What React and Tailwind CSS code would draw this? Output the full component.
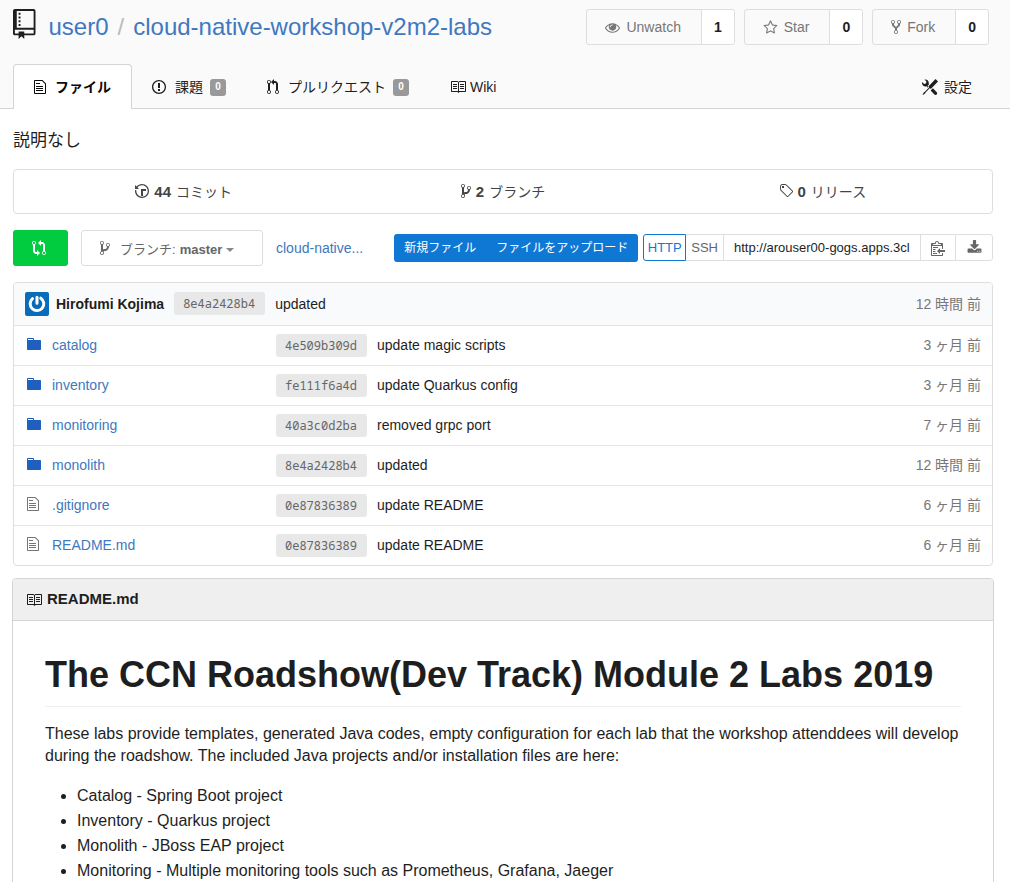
const ICONS = {
  repo: [12, 16, "M4 9H3V8h1v1zm0-3H3v1h1V6zm0-2H3v1h1V4zm0-2H3v1h1V2zm8-1v12c0 .55-.45 1-1 1H6v2l-1.5-1.5L3 16v-2H1c-.55 0-1-.45-1-1V1c0-.55.45-1 1-1h10c.55 0 1 .45 1 1zm-1 10H1v2h2v-1h3v1h5v-2zm0-10H2v9h9V1z"],
  file: [12, 16, "M6 5H2V4h4v1zM2 8h7V7H2v1zm0 2h7V9H2v1zm0 2h7v-1H2v1zm10-7.5V14c0 .55-.45 1-1 1H1c-.55 0-1-.45-1-1V2c0-.55.45-1 1-1h7.5L12 4.5zM11 5L8 2H1v12h10V5z"],
  issue: [14, 16, "M7 2.3c3.14 0 5.7 2.56 5.7 5.7s-2.56 5.7-5.7 5.7A5.71 5.71 0 0 1 1.3 8c0-3.14 2.56-5.7 5.7-5.7zM7 1C3.14 1 0 4.14 0 8s3.14 7 7 7 7-3.14 7-7-3.14-7-7-7zm1 3H6v5h2V4zm0 6H6v2h2v-2z"],
  pull: [12, 16, "M11 11.28V5c-.03-.78-.34-1.47-.94-2.06C9.46 2.35 8.78 2.03 8 2H7V0L4 3l3 3V4h1c.27.02.48.11.69.31.21.2.3.42.31.69v6.28A1.993 1.993 0 0 0 10 15a1.993 1.993 0 0 0 1-3.72zm-1 2.92c-.66 0-1.2-.55-1.2-1.2 0-.65.55-1.2 1.2-1.2.65 0 1.2.55 1.2 1.2 0 .65-.55 1.2-1.2 1.2zM4 3c0-1.11-.89-2-2-2a1.993 1.993 0 0 0-1 3.72v6.56A1.993 1.993 0 0 0 2 15a1.993 1.993 0 0 0 1-3.72V4.72c.59-.34 1-.98 1-1.72zm-.8 10c0 .66-.55 1.2-1.2 1.2-.65 0-1.2-.55-1.2-1.2 0-.65.55-1.2 1.2-1.2.65 0 1.2.55 1.2 1.2zM2 4.2C1.34 4.2.8 3.65.8 3c0-.65.55-1.2 1.2-1.2.65 0 1.2.55 1.2 1.2 0 .65-.55 1.2-1.2 1.2z"],
  book: [16, 16, "M3 5h4v1H3V5zm0 3h4V7H3v1zm0 2h4V9H3v1zm11-5h-4v1h4V5zm0 2h-4v1h4V7zm0 2h-4v1h4V9zm2-6v9c0 .55-.45 1-1 1H9.5l-1 1-1-1H2c-.55 0-1-.45-1-1V3c0-.55.45-1 1-1h5.5l1 1 1-1H15c.55 0 1 .45 1 1zm-8 .5L7.5 3H2v9h6V3.5zm7-.5H9.5l-.5.5V12h6V3z"],
  tools: [16, 16, "M4.48 7.27c.26.26 1.28 1.33 1.28 1.33l.56-.58-.88-.91 1.69-1.8s-.76-.74-.43-.45c.32-1.19.03-2.51-.87-3.44C4.93.5 3.66.2 2.52.51l1.93 2-.51 1.96-1.89.52-1.93-1.99C-.19 4.17.1 5.48 1 6.4c.94.98 2.29 1.26 3.48.87zm6.44 1.94l-2.33 2.3 3.84 3.98c.31.33.73.49 1.14.49.41 0 .82-.16 1.14-.49.63-.65.63-1.7 0-2.35l-3.79-3.93zM16 2.53L13.55 0 6.33 7.46l.88.91-4.31 4.46-.99.53-1.39 2.27.35.37 2.2-1.44.51-1.02L7.9 9.08l.88.91L16 2.53z"],
  history: [14, 16, "M8 13H6V6h5v2H8v5zM7 1C4.81 1 2.87 2.02 1.59 3.59L0 2v4h4L2.5 4.5C3.55 3.17 5.17 2.3 7 2.3c3.14 0 5.7 2.56 5.7 5.7s-2.56 5.7-5.7 5.7A5.71 5.71 0 0 1 1.3 8c0-.34.03-.67.09-1H.08C.03 7.33 0 7.66 0 8c0 3.86 3.14 7 7 7s7-3.14 7-7-3.14-7-7-7z"],
  branch: [10, 16, "M10 5c0-1.11-.89-2-2-2a1.993 1.993 0 0 0-1 3.72v.3c-.02.52-.23.98-.63 1.38-.4.4-.86.61-1.38.63-.83.02-1.48.16-2 .45V4.72a1.993 1.993 0 0 0-1-3.72C.88 1 0 1.89 0 3a2 2 0 0 0 1 1.72v6.56c-.59.35-1 .99-1 1.72 0 1.11.89 2 2 2 1.11 0 2-.89 2-2 0-.53-.2-1-.53-1.36.09-.06.48-.41.59-.47.25-.11.56-.17.94-.17 1.05-.05 1.95-.45 2.75-1.25S8.95 7.77 9 6.73h-.02C9.59 6.37 10 5.73 10 5zM2 1.8c.66 0 1.2.55 1.2 1.2 0 .65-.55 1.2-1.2 1.2C1.35 4.2.8 3.65.8 3c0-.65.55-1.2 1.2-1.2zm0 12.41c-.66 0-1.2-.55-1.2-1.2 0-.65.55-1.2 1.2-1.2.65 0 1.2.55 1.2 1.2 0 .65-.55 1.2-1.2 1.2zm6-8c-.66 0-1.2-.55-1.2-1.2 0-.65.55-1.2 1.2-1.2.65 0 1.2.55 1.2 1.2 0 .65-.55 1.2-1.2 1.2z"],
  tag: [14, 16, "M7.73 1.73C7.26 1.26 6.62 1 5.96 1H3.5C2.13 1 1 2.13 1 3.5v2.47c0 .66.27 1.3.73 1.77l6.06 6.06c.39.39 1.02.39 1.41 0l4.59-4.59a.996.996 0 0 0 0-1.41L7.73 1.73zM2.38 7.09c-.31-.3-.47-.7-.47-1.13V3.5c0-.88.72-1.59 1.59-1.59h2.47c.42 0 .83.16 1.13.47l6.14 6.13-4.73 4.73-6.13-6.15zM3.01 3h2v2H3V3h.01z"],
  compare: [14, 16, "M5 12H4c-.27-.02-.48-.11-.69-.31-.21-.2-.3-.42-.31-.69V4.72A1.993 1.993 0 0 0 2 1a1.993 1.993 0 0 0-1 3.72V11c.03.78.34 1.47.94 2.06.6.59 1.28.91 2.06.94h1v2l3-3-3-3v2zM2 1.8c.66 0 1.2.55 1.2 1.2 0 .65-.55 1.2-1.2 1.2C1.35 4.2.8 3.65.8 3c0-.65.55-1.2 1.2-1.2zm11 9.48V5c-.03-.78-.34-1.47-.94-2.06-.6-.59-1.28-.91-2.06-.94H9V0L6 3l3 3V4h1c.27.02.48.11.69.31.21.2.3.42.31.69v6.28A1.993 1.993 0 0 0 12 15a1.993 1.993 0 0 0 1-3.72zm-1 2.92c-.66 0-1.2-.55-1.2-1.2 0-.65.55-1.2 1.2-1.2.65 0 1.2.55 1.2 1.2 0 .65-.55 1.2-1.2 1.2z"],
  fork: [10, 16, "M8 1a1.993 1.993 0 0 0-1 3.72V6L5 8 3 6V4.72A1.993 1.993 0 0 0 2 1a1.993 1.993 0 0 0-1 3.72V6.5l3 3v1.78A1.993 1.993 0 0 0 5 15a1.993 1.993 0 0 0 1-3.72V9.5l3-3V4.72A1.993 1.993 0 0 0 8 1zM2 4.2C1.34 4.2.8 3.65.8 3c0-.65.55-1.2 1.2-1.2.65 0 1.2.55 1.2 1.2 0 .65-.55 1.2-1.2 1.2zm3 10c-.66 0-1.2-.55-1.2-1.2 0-.65.55-1.2 1.2-1.2.65 0 1.2.55 1.2 1.2 0 .65-.55 1.2-1.2 1.2zm3-10c-.66 0-1.2-.55-1.2-1.2 0-.65.55-1.2 1.2-1.2.65 0 1.2.55 1.2 1.2 0 .65-.55 1.2-1.2 1.2z"],
  folder: [14, 16, "M13 4H7V3c0-.66-.31-1-1-1H1c-.55 0-1 .45-1 1v10c0 .55.45 1 1 1h12c.55 0 1-.45 1-1V5c0-.55-.45-1-1-1zM6 4H1V3h5v1z"],
  clippy: [14, 16, "M2 13h4v1H2v-1zm5-6H2v1h5V7zm2 3V8l-3 3 3 3v-2h5v-2H9zM4.5 9H2v1h2.5V9zM2 12h2.5v-1H2v1zm9 1h1v2c-.02.28-.11.52-.3.7-.19.18-.42.28-.7.3H1c-.55 0-1-.45-1-1V4c0-.55.45-1 1-1h3c0-1.11.89-2 2-2 1.11 0 2 .89 2 2h3c.55 0 1 .45 1 1v5h-1V6H1v9h10v-2zM2 5h8c0-.55-.45-1-1-1H8c-.55 0-1-.45-1-1s-.45-1-1-1-1 .45-1 1-.45 1-1 1H3c-.55 0-1 .45-1 1z"],
  eye: [1792, 1792, "M1664 960q-152-236-381-353 61 104 61 225 0 185-131.5 316.5t-316.5 131.5-316.5-131.5-131.5-316.5q0-121 61-225-229 117-381 353 133 205 333.5 326.5t434.5 121.5 434.5-121.5 333.5-326.5zm-720-384q0-20-14-34t-34-14q-125 0-214.5 89.5t-89.5 214.5q0 20 14 34t34 14 34-14 14-34q0-86 61-147t147-61q20 0 34-14t14-34zm848 384q0 34-20 69-140 230-376.5 368.5t-499.5 138.5-499.5-139-376.5-368q-20-35-20-69t20-69q140-229 376.5-368t499.5-139 499.5 139 376.5 368q20 35 20 69z"],
  star: [1792, 1792, "M1201 1004l306-297-422-62-189-382-189 382-422 62 306 297-73 421 378-199 377 199zm527-357q0 22-26 48l-363 354 86 500q1 7 1 20 0 50-41 50-19 0-40-12l-449-236-449 236q-22 12-40 12-21 0-31.5-14.5t-10.5-35.5q0-6 2-20l86-500-364-354q-25-27-25-48 0-37 56-46l502-73 225-455q19-41 49-41t49 41l225 455 502 73q56 9 56 46z"],
  download: [1792, 1792, "M1344 1344q0-26-19-45t-45-19-45 19-19 45 19 45 45 19 45-19 19-45zm256 0q0-26-19-45t-45-19-45 19-19 45 19 45 45 19 45-19 19-45zm128-224v320q0 40-28 68t-68 28h-1472q-40 0-68-28t-28-68v-320q0-40 28-68t68-28h465l135 136q58 56 136 56t136-56l136-136h464q40 0 68 28t28 68zm-325-569q17 41-14 70l-448 448q-18 19-45 19t-45-19l-448-448q-31-29-14-70 17-39 59-39h256v-448q0-26 19-45t45-19h256q26 0 45 19t19 45v448h256q42 0 59 39z"],
};

function Icon({ name, className = "h-4" }) {
  const [w, h, d] = ICONS[name];
  return (
    <svg viewBox={`0 0 ${w} ${h}`} className={`shrink-0 fill-current ${className}`} aria-hidden="true">
      <path d={d} />
    </svg>
  );
}

function CountButton({ icon, iconClass, label, count }) {
  return (
    <div className="flex h-9 rounded-[3px] border border-[#dededf] text-sm">
      <button type="button" className="flex items-center gap-1.5 pr-5 pl-[18px] text-[#767676]">
        <Icon name={icon} className={iconClass} />
        {label}
      </button>
      <a href="#" className="flex items-center rounded-r-[3px] border-l border-[#dededf] bg-white px-3 font-bold text-[#1e1e1e]">
        {count}
      </a>
    </div>
  );
}

function Badge({ children }) {
  return (
    <span className="-ml-0.5 flex h-[17px] w-4 items-center justify-center rounded-[3px] bg-[#999] text-[10px] font-bold text-white">
      {children}
    </span>
  );
}

function Hash({ children }) {
  return (
    <a
      href="#"
      className="inline-block rounded-[3px] bg-[#e8e8e8] pr-[10px] pl-[9px] align-middle font-['Noto_Sans_Mono','DejaVu_Sans_Mono',monospace] text-xs leading-[23px] font-normal text-[#666]"
    >
      {children}
    </a>
  );
}

const FILES = [
  ["folder", "catalog", "4e509b309d", "update magic scripts", "3 ヶ月 前"],
  ["folder", "inventory", "fe111f6a4d", "update Quarkus config", "3 ヶ月 前"],
  ["folder", "monitoring", "40a3c0d2ba", "removed grpc port", "7 ヶ月 前"],
  ["folder", "monolith", "8e4a2428b4", "updated", "12 時間 前"],
  ["file", ".gitignore", "0e87836389", "update README", "6 ヶ月 前"],
  ["file", "README.md", "0e87836389", "update README", "6 ヶ月 前"],
];

const LABS = [
  "Catalog - Spring Boot project",
  "Inventory - Quarkus project",
  "Monolith - JBoss EAP project",
  "Monitoring - Multiple monitoring tools such as Prometheus, Grafana, Jaeger",
];

function Header() {
  return (
    <header className="border-b border-[#d4d4d5] bg-[#fafafa]">
      <div className="flex items-start justify-between pt-[9px] pr-[21px] pl-[13px]">
        <h1 className="flex items-start text-2xl leading-9 text-[#4078c0]">
          <Icon name="repo" className="mr-[13px] h-[30px] text-[#1e1e1e]" />
          <a href="#">user0</a>
          <span className="mx-[9px] text-[#bbb]">/</span>
          <a href="#">cloud-native-workshop-v2m2-labs</a>
        </h1>
        <div className="flex gap-[9px]">
          <CountButton icon="eye" iconClass="h-[15px]" label="Unwatch" count="1" />
          <CountButton icon="star" iconClass="h-[15px]" label="Star" count="0" />
          <CountButton icon="fork" iconClass="h-4" label="Fork" count="0" />
        </div>
      </div>
      <nav className="mt-[19px] flex h-11 pr-[38px] pl-[13px] text-sm text-[#1e1e1e]">
        <a
          href="#"
          className="-mb-px flex h-[45px] items-center gap-[9px] rounded-t-[4px] border border-b-0 border-[#d4d4d5] bg-white px-5 font-bold text-[#0a0a0a]"
        >
          <Icon name="file" />
          ファイル
        </a>
        <a href="#" className="ml-5 flex items-center gap-[9px] pt-0.5">
          <Icon name="issue" />
          課題
          <Badge>0</Badge>
        </a>
        <a href="#" className="ml-[41px] flex items-center gap-[9px] pt-0.5">
          <Icon name="pull" />
          プルリクエスト
          <Badge>0</Badge>
        </a>
        <a href="#" className="ml-[41px] flex items-center gap-1 pt-0.5">
          <Icon name="book" />
          Wiki
        </a>
        <a href="#" className="ml-auto flex items-center gap-1.5 pt-0.5">
          <Icon name="tools" />
          設定
        </a>
      </nav>
    </header>
  );
}

function Stats() {
  const items = [
    ["history", "44", "コミット"],
    ["branch", "2", "ブランチ"],
    ["tag", "0", "リリース"],
  ];
  return (
    <div className="mt-[15px] grid h-[45px] grid-cols-3 rounded-[4px] border border-[#dededf] px-[10px]">
      {items.map(([icon, n, label]) => (
        <a key={label} href="#" className="flex items-center justify-center gap-[5px] text-sm text-[#444]">
          <Icon name={icon} className="mb-0.5 h-4" />
          <b className="text-[15px]">{n}</b>
          {label}
        </a>
      ))}
    </div>
  );
}

function Actions() {
  return (
    <div className="mt-4 flex h-9 items-center">
      <button
        type="button"
        aria-label="Compare"
        className="flex h-9 w-[55px] items-center justify-center rounded-[3px] bg-[#01cc40] pr-[3px] text-white"
      >
        <Icon name="compare" />
      </button>
      <button
        type="button"
        className="ml-[13px] flex h-9 w-[182px] items-center rounded-[3px] border border-[#dededf] pl-[18px] text-[13px] text-[#666]"
      >
        <Icon name="branch" className="mr-[10px] h-4" />
        <span className="flex items-center gap-1 pt-[3px]">
          ブランチ:
          <b>master</b>
          <svg viewBox="0 0 8 4" className="h-1 w-2 fill-[#888]" aria-hidden="true">
            <path d="M0 0h8L4 4z" />
          </svg>
        </span>
      </button>
      <a href="#" className="ml-[13px] text-sm text-[#4078c0]">
        cloud-native...
      </a>
      <div className="ml-auto flex h-7 items-start gap-[5px]">
        <div className="flex h-7 rounded-[3px] bg-[#0e78d4] text-xs text-white">
          <button type="button" className="px-[10px]">
            新規ファイル
          </button>
          <button type="button" className="px-[10px]">
            ファイルをアップロード
          </button>
        </div>
        <div className="flex h-[27px] text-[13px] text-[#666]">
          <button type="button" className="w-[43px] rounded-l-[3px] border border-[#0e78d4] text-center text-[#0e78d4]">
            HTTP
          </button>
          <button type="button" className="border-y border-[#dededf] px-[5px]">
            SSH
          </button>
          <input
            aria-label="Clone URL"
            readOnly
            value="http://arouser00-gogs.apps.3cl"
            className="w-[198px] border border-[#dededf] px-[10px] text-[#1e1e1e] outline-none"
          />
          <button
            type="button"
            aria-label="Copy"
            className="flex w-[34px] items-center justify-center border-y border-[#dededf]"
          >
            <Icon name="clippy" />
          </button>
          <button
            type="button"
            aria-label="Download"
            className="flex w-[38px] items-center justify-center rounded-r-[3px] border border-[#dededf]"
          >
            <Icon name="download" className="h-[15px]" />
          </button>
        </div>
      </div>
    </div>
  );
}

function FileTable() {
  return (
    <div className="mt-4 overflow-hidden rounded-[4px] border border-[#dededf]">
      <table className="w-full border-collapse text-left text-sm text-[#1e1e1e]">
        <thead className="bg-[#f9fafb]">
          <tr className="h-[42px]">
            <th colSpan={3} className="p-0 pl-[11px] font-normal">
              <div className="flex items-center">
                <svg viewBox="0 0 24 24" className="mr-[7px] h-6 w-6" aria-hidden="true">
                  <rect width="24" height="24" rx="2" fill="#0a6cb8" />
                  <path
                    d="M12 5.2v6M7.5 6.7A6.8 6.8 0 1 0 15.8 6.2"
                    fill="none"
                    stroke="#fff"
                    strokeWidth="3"
                    strokeLinecap="round"
                  />
                </svg>
                <b className="mr-[10px]">Hirofumi Kojima</b>
                <Hash>8e4a2428b4</Hash>
                <span className="ml-[10px]">updated</span>
              </div>
            </th>
            <td className="p-0 pr-[11px] text-right text-[#777]">12 時間 前</td>
          </tr>
        </thead>
        <tbody>
          {FILES.map(([icon, name, hash, message, age]) => (
            <tr key={name} className="h-10 border-t border-[#e4e4e5]">
              <td className="w-[262px] p-0 pl-[13px]">
                <a href="#" className="flex items-center text-[#4078c0]">
                  <span className="mr-[7px] flex w-[18px] pb-0.5">
                    <Icon name={icon} className={icon === "folder" ? "h-4 text-[#1e5fbf]" : "h-4 text-[#767676]"} />
                  </span>
                  {name}
                </a>
              </td>
              <td className="w-[101px] p-0">
                <Hash>{hash}</Hash>
              </td>
              <td className="p-0">{message}</td>
              <td className="p-0 pr-[11px] text-right text-[#777]">{age}</td>
            </tr>
          ))}
        </tbody>
      </table>
    </div>
  );
}

function Readme() {
  return (
    <section className="-mx-px mt-3 rounded-[4px] border border-[#d4d4d5] text-[#1e1e1e]">
      <h4 className="flex h-[42px] items-center gap-[5px] rounded-t-[3px] border-b border-[#d4d4d5] bg-[#efefef] pl-[13px] text-[15px] font-bold">
        <Icon name="book" />
        README.md
      </h4>
      <div className="px-8 pt-8 pb-8 text-base leading-[22px]">
        <h1 className="border-b border-[#eee] pb-[9px] text-4xl leading-[44px] font-bold">
          The CCN Roadshow(Dev Track) Module 2 Labs 2019
        </h1>
        <p className="mt-4">
          These labs provide templates, generated Java codes, empty configuration for each lab that the workshop
          attenddees will develop during the roadshow. The included Java projects and/or installation files are here:
        </p>
        <ul className="mt-4 list-disc pl-8 leading-[25px]">
          {LABS.map((lab) => (
            <li key={lab}>{lab}</li>
          ))}
        </ul>
      </div>
    </section>
  );
}

export default function App() {
  return (
    <div className="h-screen overflow-hidden bg-white font-['Liberation_Sans','Noto_Sans_CJK_JP',sans-serif]">
      <Header />
      <main className="pt-[19px] pr-[17px] pl-[13px]">
        <p className="text-[17px] leading-[26px] text-[#1e1e1e]">説明なし</p>
        <Stats />
        <Actions />
        <FileTable />
        <Readme />
      </main>
    </div>
  );
}
